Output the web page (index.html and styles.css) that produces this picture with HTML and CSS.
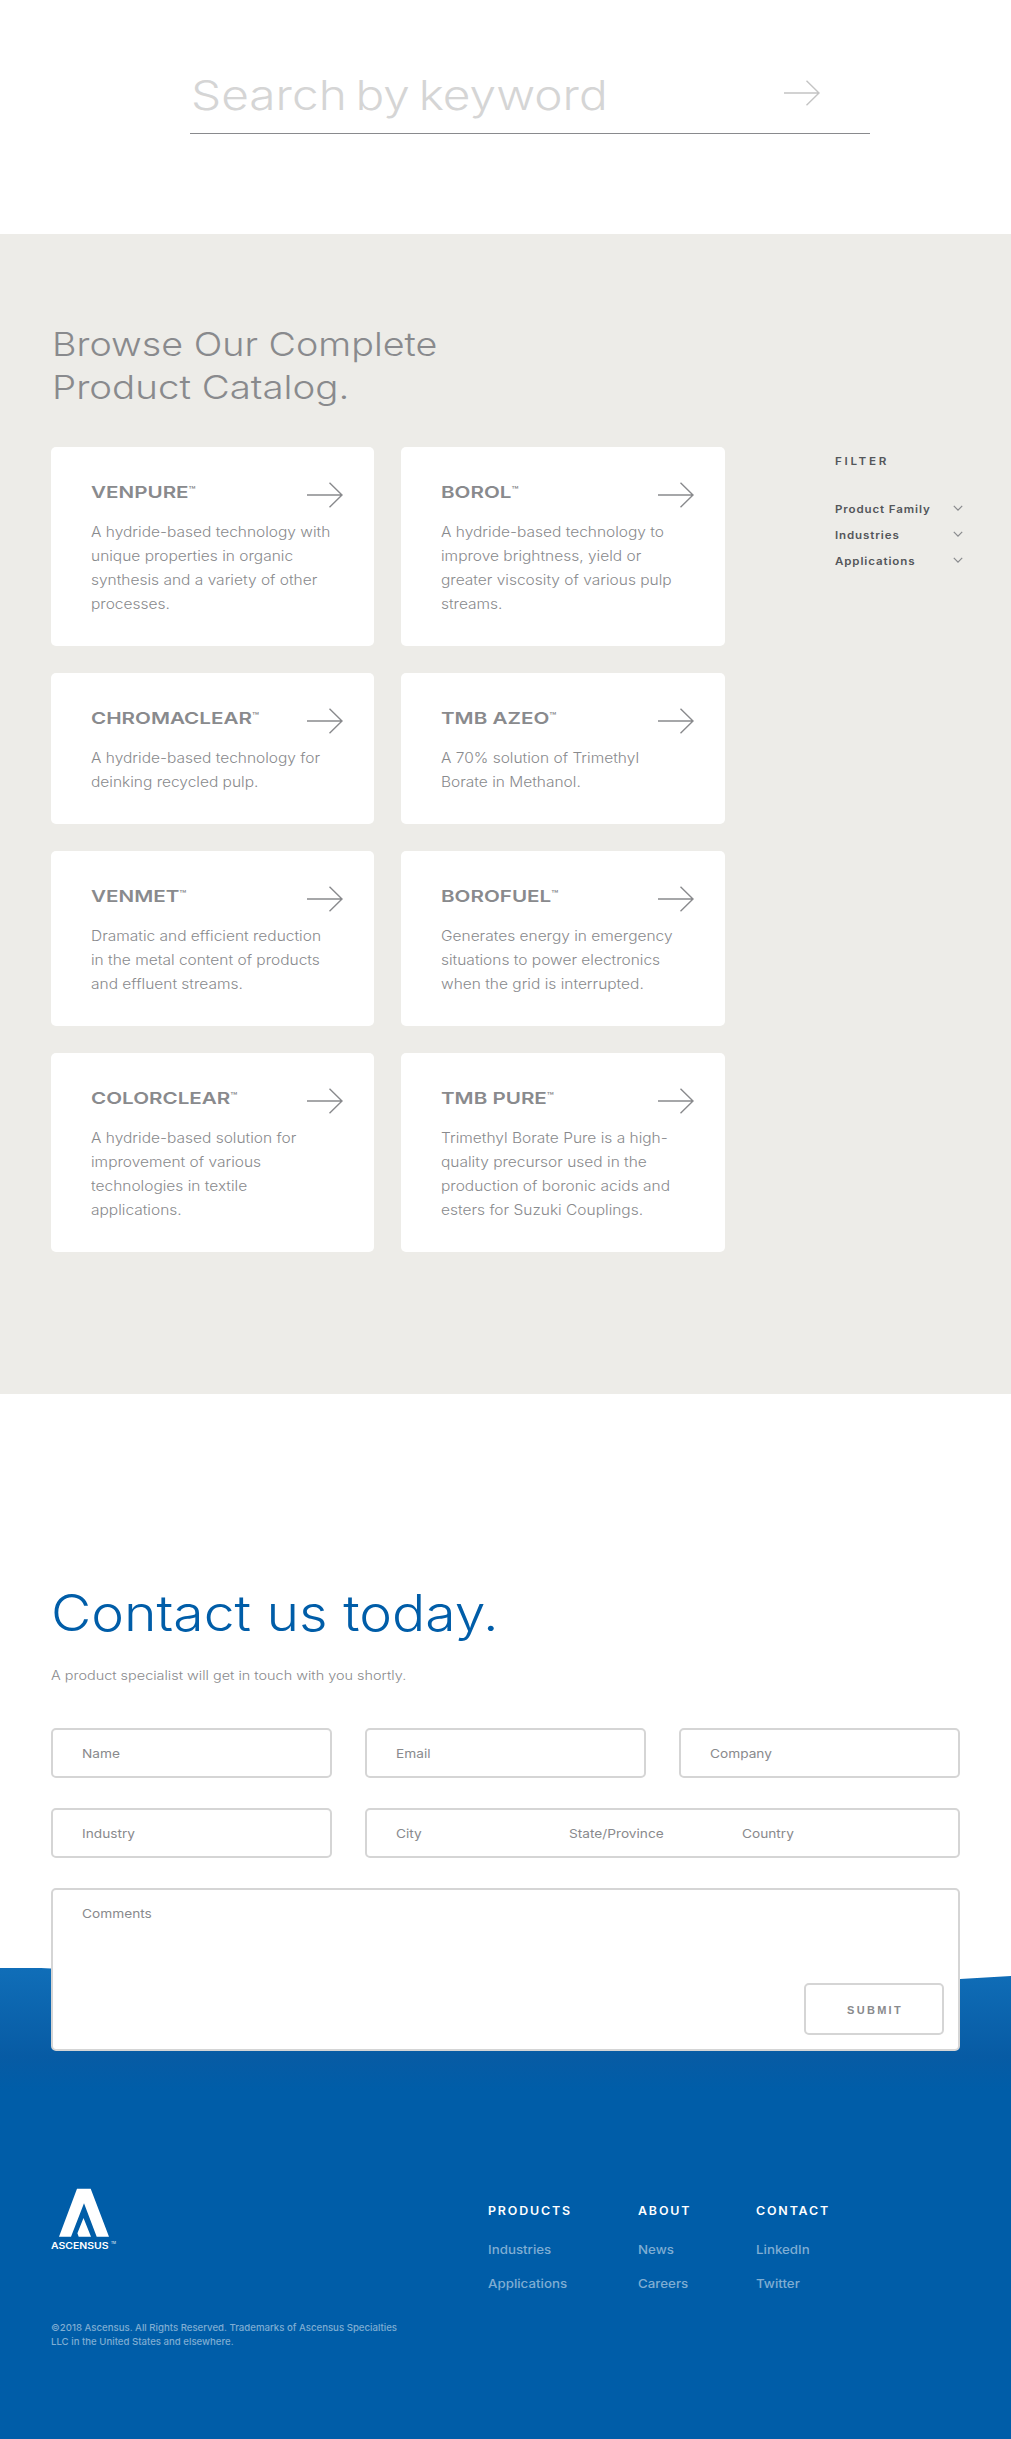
FILE: index.html
```
<!DOCTYPE html>
<html lang="en">
<head>
<meta charset="utf-8">
<title>Ascensus Product Catalog</title>
<link rel="stylesheet" href="styles.css">
</head>
<body>
<svg width="0" height="0" class="defs" aria-hidden="true">
  <symbol id="arrow" viewBox="0 0 36 26"><path d="M0 13h35M22.5 .7 35 13 22.5 25.3" fill="none" stroke="currentColor" stroke-width="1.4"/></symbol>
  <symbol id="chevron" viewBox="0 0 10 7"><path d="M.8.8 5 5.200 9.200.8" fill="none" stroke="currentColor" stroke-width="1.2"/></symbol>
</svg>

<section class="search">
  <div class="search-box">
    <span class="search-text wide">Search by keyword</span>
    <svg class="arrow"><use href="#arrow"/></svg>
  </div>
</section>

<section class="catalog">
  <h2><span class="wide">Browse Our Complete</span><span class="wide second">Product Catalog.</span></h2>
  <div class="catalog-body">
    <div class="cards">
      <a class="card"><h3 class="wide">VENPURE<sup>™</sup></h3><svg class="arrow"><use href="#arrow"/></svg>
        <p class="wide">A hydride-based technology with<br>unique properties in organic<br>synthesis and a variety of other<br>processes.</p></a>
      <a class="card"><h3 class="wide">BOROL<sup>™</sup></h3><svg class="arrow"><use href="#arrow"/></svg>
        <p class="wide">A hydride-based technology to<br>improve brightness, yield or<br>greater viscosity of various pulp<br>streams.</p></a>
      <a class="card"><h3 class="wide">CHROMACLEAR<sup>™</sup></h3><svg class="arrow"><use href="#arrow"/></svg>
        <p class="wide">A hydride-based technology for<br>deinking recycled pulp.</p></a>
      <a class="card"><h3 class="wide">TMB AZEO<sup>™</sup></h3><svg class="arrow"><use href="#arrow"/></svg>
        <p class="wide">A 70% solution of Trimethyl<br>Borate in Methanol.</p></a>
      <a class="card"><h3 class="wide">VENMET<sup>™</sup></h3><svg class="arrow"><use href="#arrow"/></svg>
        <p class="wide">Dramatic and efficient reduction<br>in the metal content of products<br>and effluent streams.</p></a>
      <a class="card"><h3 class="wide">BOROFUEL<sup>™</sup></h3><svg class="arrow"><use href="#arrow"/></svg>
        <p class="wide">Generates energy in emergency<br>situations to power electronics<br>when the grid is interrupted.</p></a>
      <a class="card"><h3 class="wide">COLORCLEAR<sup>™</sup></h3><svg class="arrow"><use href="#arrow"/></svg>
        <p class="wide">A hydride-based solution for<br>improvement of various<br>technologies in textile<br>applications.</p></a>
      <a class="card"><h3 class="wide">TMB PURE<sup>™</sup></h3><svg class="arrow"><use href="#arrow"/></svg>
        <p class="wide">Trimethyl Borate Pure is a high-<br>quality precursor used in the<br>production of boronic acids and<br>esters for Suzuki Couplings.</p></a>
    </div>
    <aside class="filter">
      <h4 class="wide">FILTER</h4>
      <ul>
        <li><span class="wide">Product Family</span><svg class="chevron"><use href="#chevron"/></svg></li>
        <li><span class="wide">Industries</span><svg class="chevron"><use href="#chevron"/></svg></li>
        <li><span class="wide">Applications</span><svg class="chevron"><use href="#chevron"/></svg></li>
      </ul>
    </aside>
  </div>
</section>

<section class="contact">
  <h1 class="wide">Contact us today.</h1>
  <p class="lead wide">A product specialist will get in touch with you shortly.</p>
  <form class="form">
    <label class="field"><span class="wide">Name</span></label>
    <label class="field"><span class="wide">Email</span></label>
    <label class="field"><span class="wide">Company</span></label>
    <label class="field"><span class="wide">Industry</span></label>
    <div class="field place"><span class="wide">City</span><span class="wide">State/Province</span><span class="wide">Country</span></div>
    <div class="field comments"><span class="wide">Comments</span><button type="button" class="submit">SUBMIT</button></div>
  </form>
</section>

<footer class="footer">
  <div class="brand">
    <svg class="logo" viewBox="0 0 66 62" role="img" aria-label="Ascensus">
      <path d="M26 .7h13.700L58 48.700H45.700L33 15.300 20 48.700H8zM32.500 30 40 48.700H27.700L26.400 45.300z" fill="#fff"/>
      <text x="0" y="60.700" textLength="57.500" lengthAdjust="spacingAndGlyphs" class="logo-name">ASCENSUS</text>
      <text x="60" y="55.500" textLength="5" lengthAdjust="spacingAndGlyphs" class="logo-tm">TM</text>
    </svg>
    <p class="legal wide">©2018 Ascensus. All Rights Reserved. Trademarks of Ascensus Specialties<br>LLC in the United States and elsewhere.</p>
  </div>
  <nav class="links">
    <div><h5 class="wide">PRODUCTS</h5><a class="wide">Industries</a><a class="wide">Applications</a></div>
    <div><h5 class="wide">ABOUT</h5><a class="wide">News</a><a class="wide">Careers</a></div>
    <div><h5 class="wide">CONTACT</h5><a class="wide">LinkedIn</a><a class="wide">Twitter</a></div>
  </nav>
</footer>
</body>
</html>
```
FILE: styles.css
```
* { box-sizing: border-box; margin: 0; padding: 0; }
body { font-family: Inter, "Liberation Sans", sans-serif; color: #898a8d; background: #fff; }
.defs { display: block; height: 0; }
ul { list-style: none; }

/* extended letterforms */
.wide { display: block; width: max-content; white-space: nowrap; transform: scaleX(var(--stretch, 1.11)); transform-origin: 0 50%; }

.arrow { width: 36px; height: 26px; flex: none; color: #898a8d; }

.search { height: 234px; padding: 70px 141px 0 190px; }
.search-box { height: 64px; display: flex; justify-content: space-between; border-bottom: 1px solid #898a8d; padding: 0 50px 0 1px; }
.search-text { --stretch: 1.165; font-size: 41px; line-height: 50px; font-weight: 300; word-spacing: -4px; color: #d5d5d5; }
.search .arrow { margin-top: 10px; color: #c4c4c4; }

.catalog { height: 1160px; padding: 89px 48px 0 51px; background: #edece8; }
.catalog h2 { padding-left: 1px; font-size: 33px; line-height: 43px; font-weight: 300; }
.catalog h2 .wide { --stretch: 1.142; }
.catalog h2 .second { --stretch: 1.165; }
.catalog-body { display: flex; justify-content: space-between; margin-top: 38px; }
.cards { width: 674px; display: grid; grid-template-columns: 323px 324px; gap: 27px; }
.card { display: grid; grid-template-columns: 1fr auto; align-content: start; row-gap: 16px; padding: 33px 31px 30px 40px; background: #fff; border-radius: 5px; }
.card h3 { --stretch: 1.25; font-size: 16.500px; line-height: 24px; font-weight: 600; }
.card sup { font-size: 9px; line-height: 0; vertical-align: 5.500px; font-weight: 600; }
.card .arrow { margin: 1.500px 0 -4px; }
.card p { --stretch: 1.107; grid-column: 1 / -1; font-size: 14px; line-height: 24px; font-weight: 350; }

.filter { width: 128px; padding-top: 5px; color: #53565a; }
.filter h4 { font-size: 10.500px; line-height: 20px; font-weight: 600; letter-spacing: 2.400px; }
.filter ul { margin-top: 24px; }
.filter li { display: flex; justify-content: space-between; align-items: center; height: 26px; font-size: 10.500px; font-weight: 600; letter-spacing: .8px; }
.filter li .wide { --stretch: 1.1; }
.chevron { width: 10px; height: 7px; margin-top: -2px; color: #898a8d; }

.contact { position: relative; z-index: 1; padding: 189px 51px 0; }
.contact h1 { --stretch: 1.105; font-size: 50px; line-height: 60px; font-weight: 300; color: #005da8; }
.lead { --stretch: 1.155; margin-top: 23px; font-size: 12.500px; line-height: 20px; font-weight: 350; }
.form { display: grid; grid-template-columns: repeat(3, 281px); gap: 30px 33px; margin-top: 42px; }
.field { height: 50px; display: flex; align-items: center; padding: 2px 29px 0; font-size: 12px; line-height: 20px; border: 2px solid #d5d5d5; border-radius: 5px; background: #fff; }
.field .wide { --stretch: 1.14; }
.place { grid-column: 2 / 4; display: grid; grid-template-columns: 173px 173px 1fr; }
.comments { grid-column: 1 / -1; height: 163px; padding: 14px 14px 14px 29px; align-items: flex-start; justify-content: space-between; }
.submit { align-self: flex-end; width: 140px; height: 52px; padding: 2px 0 0 2px; border: 2px solid #d5d5d5; border-radius: 5px; background: #fff; color: #898a8d; font: bold 11px "Liberation Sans", sans-serif; letter-spacing: 2.300px; }

.footer { height: 471px; margin-top: -83px; padding: 220px 51px 0; display: flex; background: linear-gradient(#106eb8 0, #075ba4 88px, #005da8 122px); clip-path: polygon(0 0, 41px 0, 140px 5px, 500px 20px, 960px 11px, 100% 8px, 100% 100%, 0 100%); }
.brand { width: 436.500px; }
.logo { display: block; width: 66px; height: 62px; }
.logo-name { font: 600 9.500px Inter, sans-serif; fill: #fff; }
.logo-tm { font: 400 3.500px Inter, sans-serif; fill: #fff; }
.legal { --stretch: 1.013; margin-top: 71px; font-size: 9.500px; line-height: 14px; font-weight: 500; color: #7fadd3; }
.links { display: grid; grid-template-columns: 150px 118px 1fr; padding-top: 12.500px; }
.links h5 { --stretch: 1.08; margin-bottom: 12px; font-size: 11.500px; line-height: 20px; font-weight: 600; letter-spacing: 1.700px; color: #fff; }
.links a { font-size: 12px; line-height: 34px; font-weight: 500; color: #7fadd3; }
```
